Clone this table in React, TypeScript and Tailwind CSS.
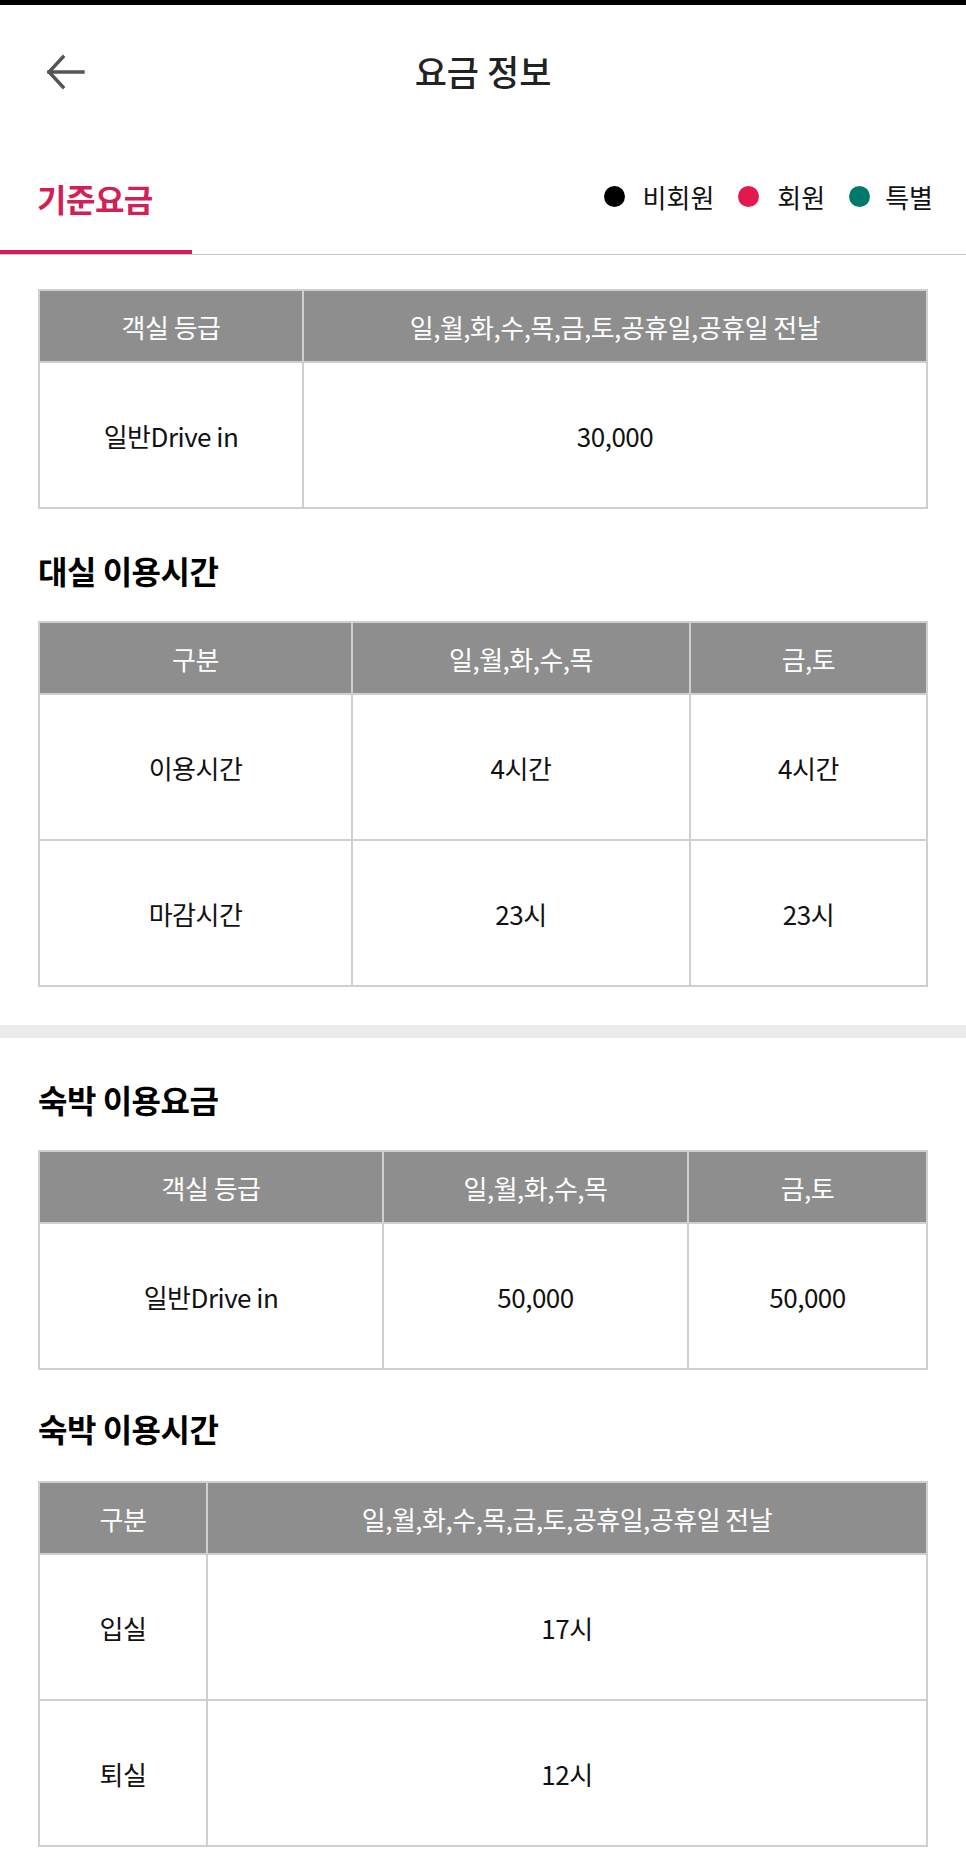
type TableProps = {
  cols: string[]
  head: string[]
  rows: string[][]
}

function PriceTable({ cols, head, rows }: TableProps) {
  return (
    <table className="w-full table-fixed border-collapse text-[26px] tracking-[-0.5px]">
      <colgroup>
        {cols.map((c, i) => (
          <col key={i} className={c} />
        ))}
      </colgroup>
      <thead>
        <tr>
          {head.map((h, i) => (
            <th key={i} className="h-[72px] border-2 border-[#cfcfcf] bg-[#8e8e8e] font-normal text-white">
              {h}
            </th>
          ))}
        </tr>
      </thead>
      <tbody>
        {rows.map((r, i) => (
          <tr key={i}>
            {r.map((cell, j) => (
              <td key={j} className="h-[146px] border-2 border-[#cfcfcf] text-center text-[#111]">
                {cell}
              </td>
            ))}
          </tr>
        ))}
      </tbody>
    </table>
  )
}

function SectionTitle({ children, className }: { children: string; className: string }) {
  return (
    <h2 className={`text-[32px] font-bold leading-[40px] tracking-[-0.5px] text-black ${className}`}>
      {children}
    </h2>
  )
}

export default function App() {
  const allDays = '일,월,화,수,목,금,토,공휴일,공휴일 전날'

  return (
    <div className="min-h-screen bg-white font-['Noto_Sans_CJK_KR',sans-serif]">
      {/* status bar */}
      <div className="h-[5px] bg-black" />

      {/* Header */}
      <header className="relative flex h-[133px] items-center justify-center">
        <button className="absolute left-[46px] top-[48px] text-[#555]">
          <svg width="40" height="38" viewBox="0 0 40 38" fill="none" stroke="currentColor" strokeWidth="3.4" strokeLinecap="square">
            <path d="M3 19 H37" />
            <path d="M17 4 L3 19 L17 34" />
          </svg>
        </button>
        <h1 className="text-[35px] font-medium text-[#222]">요금 정보</h1>
      </header>

      {/* Tabs + legend */}
      <div className="flex h-[117px] items-stretch justify-between border-b border-[#c8c8c8]">
        <div className="flex w-[192px] flex-col">
          <div className="flex flex-1 items-center pl-[37px] pt-[8px] text-[32px] font-bold tracking-[-0.5px] text-[#d21f56]">
            기준요금
          </div>
          <div className="h-[4px] bg-[#d21f56]" />
        </div>
        <div className="flex items-center gap-[24px] pr-[33px] pt-[1px] text-[26px] text-[#111]">
          <span className="flex items-center gap-[18px]">
            <span className="h-[21px] w-[21px] shrink-0 rounded-full bg-black" />
            비회원
          </span>
          <span className="flex items-center gap-[18px]">
            <span className="h-[21px] w-[21px] shrink-0 rounded-full bg-[#e3184f]" />
            회원
          </span>
          <span className="flex items-center gap-[15px]">
            <span className="h-[21px] w-[21px] shrink-0 rounded-full bg-[#00796b]" />
            특별
          </span>
        </div>
      </div>

      {/* 대실 */}
      <section className="px-[38px] pb-[38px] pt-[34px]">
        <PriceTable
          cols={['w-[264px]', 'w-auto']}
          head={['객실 등급', allDays]}
          rows={[['일반Drive in', '30,000']]}
        />
        <SectionTitle className="mb-[31px] mt-[41px]">대실 이용시간</SectionTitle>
        <PriceTable
          cols={['w-[313px]', 'w-[338px]', 'w-auto']}
          head={['구분', '일,월,화,수,목', '금,토']}
          rows={[
            ['이용시간', '4시간', '4시간'],
            ['마감시간', '23시', '23시'],
          ]}
        />
      </section>

      <div className="h-[13px] bg-[#ebebeb]" />

      {/* 숙박 */}
      <section className="px-[38px] pb-[26px]">
        <SectionTitle className="mb-[31px] mt-[41px]">숙박 이용요금</SectionTitle>
        <PriceTable
          cols={['w-[344px]', 'w-[305px]', 'w-auto']}
          head={['객실 등급', '일,월,화,수,목', '금,토']}
          rows={[['일반Drive in', '50,000', '50,000']]}
        />
        <SectionTitle className="mb-[33px] mt-[38px]">숙박 이용시간</SectionTitle>
        <PriceTable
          cols={['w-[168px]', 'w-auto']}
          head={['구분', allDays]}
          rows={[
            ['입실', '17시'],
            ['퇴실', '12시'],
          ]}
        />
      </section>
    </div>
  )
}
